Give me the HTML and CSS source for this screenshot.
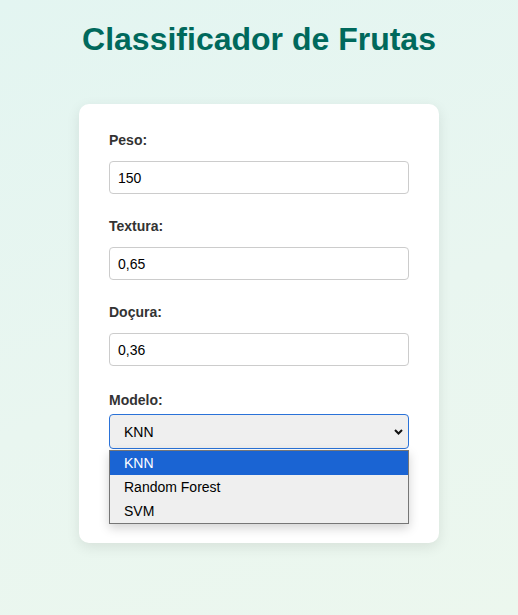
FILE: index.html
```html
<!DOCTYPE html>
<html lang="pt">
<head>
<meta charset="utf-8">
<title>Classificador de Frutas</title>
<link rel="stylesheet" href="styles.css">
</head>
<body>
  <h1 class="title">Classificador de Frutas</h1>
  <div class="card">
    <div class="field">
      <label class="label">Peso:</label>
      <div class="input">150</div>
    </div>
    <div class="field">
      <label class="label">Textura:</label>
      <div class="input">0,65</div>
    </div>
    <div class="field">
      <label class="label">Doçura:</label>
      <div class="input">0,36</div>
    </div>
    <div class="field field-last">
      <label class="label">Modelo:</label>
      <div class="select-wrap">
        <div class="select">
          <span>KNN</span>
          <svg class="chevron" width="9" height="6" viewBox="0 0 9 6"><path d="M1 1 L4.5 4.5 L8 1" fill="none" stroke="#111" stroke-width="2"/></svg>
        </div>
        <ul class="listbox">
          <li class="option selected">KNN</li>
          <li class="option">Random Forest</li>
          <li class="option">SVM</li>
        </ul>
      </div>
    </div>
    <div class="button">Classificar</div>
  </div>
</body>
</html>
```
FILE: styles.css
```css
* { box-sizing: border-box; }
html, body { height: 100%; }
body {
  margin: 0;
  padding: 21px 0 0;
  font-family: "Liberation Sans", Arial, sans-serif;
  background: linear-gradient(160deg, #e3f5f1 0%, #e9f6f0 55%, #ecf7ee 100%);
  display: flex;
  flex-direction: column;
  align-items: center;
}
.title {
  margin: 0;
  font-size: 32px;
  font-weight: bold;
  line-height: 37px;
  color: #00695c;
}
.card {
  margin-top: 46px;
  width: 360px;
  background: #fff;
  border-radius: 10px;
  box-shadow: 0 4px 14px rgba(0, 0, 0, 0.09);
  padding: 28px 30px 30px;
  display: flex;
  flex-direction: column;
}
.field {
  display: flex;
  flex-direction: column;
  margin-bottom: 24px;
}
.field-last { margin-bottom: 24px; }
.label {
  font-size: 14px;
  line-height: 17px;
  font-weight: bold;
  color: #333;
  margin: 0 0 12px;
}
.field-last .label { margin-bottom: 5px; margin-top: 2px; }
.input {
  height: 33px;
  border: 1px solid #ccc;
  border-radius: 4px;
  padding: 0 8px;
  font-size: 14px;
  display: flex;
  align-items: center;
  color: #000;
  background: #fff;
}
.select-wrap { position: relative; }
.select {
  height: 35px;
  border: 1px solid #2a72d8;
  border-radius: 4px;
  background: #efefef;
  padding: 0 5px 0 14px;
  font-size: 14px;
  color: #000;
  display: flex;
  align-items: center;
  justify-content: space-between;
}
.chevron { display: block; margin-top: 1px; }
.listbox {
  position: absolute;
  left: 0;
  right: 0;
  top: 100%;
  margin: 1px 0 0;
  padding: 0;
  list-style: none;
  background: #efefef;
  border: 1px solid #767676;
  box-shadow: 0 4px 10px rgba(0, 0, 0, 0.18);
  z-index: 2;
}
.option {
  height: 24px;
  line-height: 24px;
  padding: 0 14px;
  font-size: 14px;
  color: #000;
}
.option.selected {
  background: #1a64d3;
  color: #fff;
}
.button {
  height: 40px;
  border-radius: 4px;
  background: #00796b;
  color: #fff;
  font-size: 16px;
  display: flex;
  align-items: center;
  justify-content: center;
}
```
